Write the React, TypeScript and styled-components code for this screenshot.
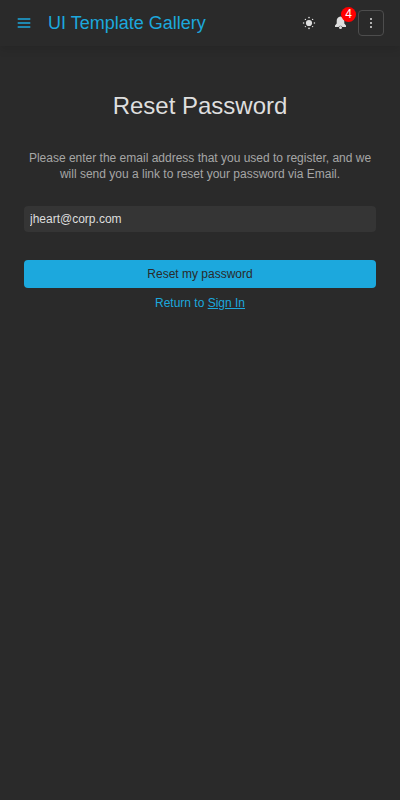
import React from "react";
import styled, { createGlobalStyle } from "styled-components";

const GlobalStyle = createGlobalStyle`
  *, *::before, *::after { box-sizing: border-box; }
  body {
    margin: 0;
    background: #2a2a2a;
    color: #dedede;
    font: 12px/16px "Liberation Sans", Arial, sans-serif;
  }
`;

const Page = styled.div`
  min-height: 100vh;
  display: flex;
  flex-direction: column;
`;

const Toolbar = styled.header`
  display: flex;
  align-items: center;
  height: 46px;
  padding: 0 16px 0 10px;
  gap: 4px;
  background: #2a2a2a;
  box-shadow: 0 4px 8px rgba(0, 0, 0, 0.1);
`;

const IconButton = styled.button<{ $outlined?: boolean; $accent?: boolean }>`
  position: relative;
  display: flex;
  align-items: center;
  justify-content: center;
  flex: none;
  width: ${(p) => (p.$accent ? 28 : 26)}px;
  height: 26px;
  padding: 0;
  border: 1px solid ${(p) => (p.$outlined ? "#4d4d4d" : "transparent")};
  border-radius: 4px;
  background: transparent;
  color: ${(p) => (p.$accent ? "#1ca8dd" : "#dedede")};
  cursor: pointer;
`;

const Brand = styled.span`
  flex: 1;
  margin-left: 6px;
  color: #1ca8dd;
  font-size: 18px;
  line-height: 24px;
`;

const Actions = styled.div`
  display: flex;
  gap: 5px;
`;

const Badge = styled.span`
  position: absolute;
  top: -4px;
  right: -4px;
  width: 15px;
  height: 15px;
  border-radius: 50%;
  background: #f00;
  color: #fff;
  line-height: 15px;
  font-size: 12px;
  text-align: center;
`;

const Form = styled.form`
  display: flex;
  flex-direction: column;
  width: 100%;
  max-width: 500px;
  margin: 0 auto;
  padding: 44px 24px;
`;

const Title = styled.h1`
  margin: 0 0 28px;
  font-size: 24px;
  line-height: 32px;
  font-weight: 400;
  text-align: center;
`;

const Hint = styled.p`
  margin: 0 0 24px;
  color: #a6a6a6;
  text-align: center;
`;

const EmailInput = styled.input`
  width: 100%;
  height: 26px;
  margin-bottom: 28px;
  padding: 0 6px;
  border: 0;
  border-radius: 4px;
  background: #353535;
  color: #dedede;
  font: inherit;
`;

const SubmitButton = styled.button`
  height: 28px;
  padding: 0;
  border: 0;
  border-radius: 4px;
  background: #1ca8dd;
  color: #2a2a2a;
  font: inherit;
  cursor: pointer;
`;

const ReturnLine = styled.div`
  margin-top: 7px;
  color: #1ca8dd;
  text-align: center;
`;

const SignIn = styled.a`
  color: inherit;
`;

const MenuIcon = () => (
  <svg width="16" height="16" viewBox="0 0 16 16" stroke="currentColor" strokeWidth="1.5" aria-hidden="true">
    <path d="M1.7 4h12.6M1.7 8h12.6M1.7 12h12.6" />
  </svg>
);

const SunIcon = () => (
  <svg width="14" height="14" viewBox="0 0 14 14" fill="currentColor" aria-hidden="true">
    <circle cx="7" cy="7" r="3.1" />
    <circle cx="7" cy="1.6" r="0.8" />
    <circle cx="7" cy="12.4" r="0.8" />
    <circle cx="1.6" cy="7" r="0.8" />
    <circle cx="12.4" cy="7" r="0.8" />
    <circle cx="3.4" cy="3.4" r="0.7" />
    <circle cx="10.6" cy="3.4" r="0.7" />
    <circle cx="3.4" cy="10.6" r="0.7" />
    <circle cx="10.6" cy="10.6" r="0.7" />
  </svg>
);

const BellIcon = () => (
  <svg width="14" height="14" viewBox="0 0 14 14" fill="currentColor" aria-hidden="true">
    <path d="M7.5 .5C5 .7 3.7 2.6 3.7 5v2.6L2 9.5v1.4h3.7a2 2 0 0 1 3.6 0H13V9.5l-1.7-1.9V5c0-2.4-1.3-4.3-3.8-4.5z" />
    <circle cx="7.5" cy="11.5" r="1.5" />
  </svg>
);

const MoreIcon = () => (
  <svg width="14" height="14" viewBox="0 0 14 14" fill="currentColor" aria-hidden="true">
    <circle cx="7" cy="3" r="1" />
    <circle cx="7" cy="7" r="1" />
    <circle cx="7" cy="11" r="1" />
  </svg>
);

export default function App() {
  return (
    <Page>
      <GlobalStyle />
      <Toolbar>
        <IconButton type="button" $accent aria-label="Menu"><MenuIcon /></IconButton>
        <Brand>UI Template Gallery</Brand>
        <Actions>
          <IconButton type="button" aria-label="Switch theme"><SunIcon /></IconButton>
          <IconButton type="button" aria-label="Notifications">
            <BellIcon />
            <Badge>4</Badge>
          </IconButton>
          <IconButton type="button" $outlined aria-label="More"><MoreIcon /></IconButton>
        </Actions>
      </Toolbar>
      <main>
        <Form onSubmit={(e) => e.preventDefault()}>
          <Title>Reset Password</Title>
          <Hint>
            Please enter the email address that you used to register, and we
            will send you a link to reset your password via Email.
          </Hint>
          <EmailInput type="email" aria-label="Email" defaultValue="jheart@corp.com" />
          <SubmitButton type="submit">Reset my password</SubmitButton>
          <ReturnLine>Return to <SignIn href="#sign-in">Sign In</SignIn></ReturnLine>
        </Form>
      </main>
    </Page>
  );
}
